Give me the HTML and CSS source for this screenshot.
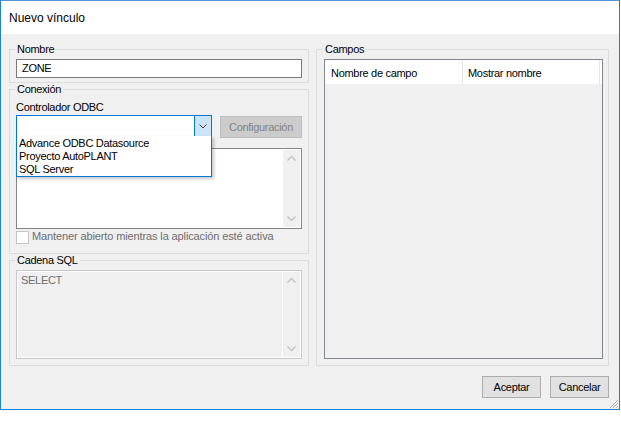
FILE: index.html
```html
<!DOCTYPE html>
<html lang="es">
<head>
<meta charset="utf-8">
<title>Nuevo vínculo</title>
<link rel="stylesheet" href="styles.css">
</head>
<body>
<div class="window">
  <div class="titlebar">Nuevo vínculo</div>
  <div class="client">
    <div class="columns">
      <div class="leftcol">
        <fieldset class="group g-nombre">
          <legend>Nombre</legend>
          <div class="textbox">ZONE</div>
        </fieldset>
        <fieldset class="group g-conexion">
          <legend>Conexión</legend>
          <div class="label">Controlador ODBC</div>
          <div class="combo-row">
            <div class="combo">
              <div class="combo-value"></div>
              <div class="combo-btn">
                <svg width="16" height="20" viewBox="0 0 16 20"><path d="M4.5 8.5 L8 12 L11.5 8.5" fill="none" stroke="#3c3c3c" stroke-width="1"/></svg>
              </div>
              <ul class="dropdown">
                <li>Advance ODBC Datasource</li>
                <li>Proyecto AutoPLANT</li>
                <li>SQL Server</li>
              </ul>
            </div>
            <div class="btn btn-disabled">Configuración</div>
          </div>
          <div class="scrollbox memo">
            <div class="scroll-text"></div>
            <div class="vscroll">
              <svg width="17" height="17" viewBox="0 0 17 17"><path d="M4.5 10.5 L8.5 6.5 L12.5 10.5" fill="none" stroke="#c2c2c2" stroke-width="1.4"/></svg>
              <svg width="17" height="17" viewBox="0 0 17 17"><path d="M4.5 6.5 L8.5 10.5 L12.5 6.5" fill="none" stroke="#c2c2c2" stroke-width="1.4"/></svg>
            </div>
          </div>
          <div class="check-row">
            <span class="checkbox"></span>
            <span class="check-label">Mantener abierto mientras la aplicación esté activa</span>
          </div>
        </fieldset>
        <fieldset class="group g-sql">
          <legend>Cadena SQL</legend>
          <div class="scrollbox sqlbox">
            <div class="scroll-text sql-text">SELECT</div>
            <div class="vscroll">
              <svg width="17" height="17" viewBox="0 0 17 17"><path d="M4.5 10.5 L8.5 6.5 L12.5 10.5" fill="none" stroke="#c2c2c2" stroke-width="1.4"/></svg>
              <svg width="17" height="17" viewBox="0 0 17 17"><path d="M4.5 6.5 L8.5 10.5 L12.5 6.5" fill="none" stroke="#c2c2c2" stroke-width="1.4"/></svg>
            </div>
          </div>
        </fieldset>
      </div>
      <fieldset class="group g-campos">
        <legend>Campos</legend>
        <div class="listview">
          <div class="lv-header">
            <div class="lv-col c1">Nombre de campo</div>
            <div class="lv-col c2">Mostrar nombre</div>
          </div>
        </div>
      </fieldset>
    </div>
    <div class="buttons">
      <div class="btn">Aceptar</div>
      <div class="btn">Cancelar</div>
    </div>
  </div>
  <svg class="grip" width="12" height="12" viewBox="0 0 12 12">
    <path d="M11 3 L3 11 M11 6 L6 11 M11 9 L9 11" stroke="#a9a9a9" stroke-width="1" fill="none"/>
    <path d="M12 3 L4 11 M12 6 L7 11 M12 9 L10 11" stroke="#ffffff" stroke-width="1" fill="none"/>
  </svg>
</div>
</body>
</html>
```

FILE: styles.css
```css
* { box-sizing: border-box; }
html, body { margin: 0; padding: 0; background: #ffffff; }
body {
  font-family: "Liberation Sans", Arial, sans-serif;
  font-size: 11px;
  letter-spacing: -0.3px;
  color: #000;
  width: 621px;
  height: 448px;
  overflow: hidden;
}
.window {
  position: relative;
  width: 620px;
  height: 410px;
  border: 1px solid #1883d7;
  border-top-color: #4f95dc;
  display: flex;
  flex-direction: column;
}
.titlebar {
  height: 33px;
  background: #ffffff;
  padding: 10px 0 0 8px;
  font-size: 12px;
  letter-spacing: 0;
  line-height: 15px;
  color: #000;
}
.client {
  flex: 1;
  background: #f0f0f0;
  padding: 8px 10px 0 8px;
  display: flex;
  flex-direction: column;
}
.columns {
  display: flex;
  gap: 7px;
  align-items: stretch;
}
.leftcol {
  width: 300px;
  display: flex;
  flex-direction: column;
}
.group {
  margin: 0;
  border: 1px solid #dcdcdc;
  padding: 0 6px;
  min-width: 0;
}
.group legend {
  padding: 0 2px;
  margin-left: -1px;
  line-height: 15px;
}
.g-nombre { padding-bottom: 4px; }
.g-conexion { margin-top: -1px; padding-bottom: 9px; }
.g-sql { margin-top: -1px; padding-bottom: 6px; }
.g-campos {
  width: 293px;
  padding: 0 5px 6px 7px;
}
.textbox {
  margin-top: 2px;
  height: 19px;
  border: 1px solid #7a7a7a;
  background: #ffffff;
  padding-left: 5px;
  line-height: 17px;
}
.label {
  margin-top: 3px;
  line-height: 15px;
}
.combo-row {
  display: flex;
  align-items: flex-start;
}
.combo {
  position: relative;
  width: 196px;
  height: 22px;
  border: 1px solid #0078d7;
  background: #ffffff;
  display: flex;
}
.combo-value { flex: 1; }
.combo-btn {
  width: 17px;
  height: 20px;
  background: #cce4f7;
  border-left: 1px solid #0078d7;
}
.combo-btn svg { display: block; }
.dropdown {
  position: absolute;
  left: -1px;
  top: 20px;
  width: 196px;
  margin: 0;
  padding: 1px 0 0 0;
  list-style: none;
  background: #ffffff;
  border: 1px solid #0078d7;
  border-top: none;
  box-shadow: 2px 2px 3px rgba(0, 0, 0, 0.22);
  z-index: 5;
}
.dropdown li {
  line-height: 13px;
  padding-left: 2px;
  white-space: nowrap;
}
.btn {
  width: 59px;
  height: 22px;
  border: 1px solid #adadad;
  background: #e1e1e1;
  text-align: center;
  line-height: 20px;
}
.btn-disabled {
  width: 82px;
  margin-left: 8px;
  margin-top: 1px;
  background: #cccccc;
  border-color: #bfbfbf;
  color: #838383;
}
.scrollbox {
  display: flex;
  gap: 1px;
  padding: 1px;
  background: #ffffff;
}
.memo {
  margin-top: 10px;
  height: 81px;
  border: 1px solid #858585;
}
.scroll-text { flex: 1; background: #ffffff; }
.vscroll {
  width: 17px;
  background: #f0f0f0;
  display: flex;
  flex-direction: column;
  justify-content: space-between;
}
.vscroll svg { display: block; }
.check-row {
  display: flex;
  align-items: flex-start;
  line-height: 15px;
}
.checkbox {
  width: 13px;
  height: 13px;
  margin-top: 2px;
  border: 1px solid #c4c4c4;
  background: #ffffff;
  flex: none;
}
.check-label {
  margin-left: 3px;
  color: #6d6d6d;
  letter-spacing: -0.12px;
  white-space: nowrap;
}
.sqlbox {
  margin-top: 2px;
  height: 89px;
  border: 1px solid #c8c8c8;
}
.sql-text {
  background: #f0f0f0;
  color: #6d6d6d;
  padding: 1px 3px;
  line-height: 15px;
}
.listview {
  margin-top: 2px;
  height: 300px;
  border: 1px solid #828790;
  background: #f0f0f0;
}
.lv-header {
  display: flex;
  height: 24px;
  background: #ffffff;
}
.lv-col {
  padding-top: 2px;
  line-height: 22px;
  border-right: 1px solid #e5e5e5;
  white-space: nowrap;
}
.lv-col.c1 { width: 138px; padding-left: 6px; }
.lv-col.c2 { width: 137px; padding-left: 5px; }
.buttons {
  margin-top: 10px;
  display: flex;
  justify-content: flex-end;
  gap: 9px;
}
.grip {
  position: absolute;
  right: 0;
  bottom: 0;
}
```
